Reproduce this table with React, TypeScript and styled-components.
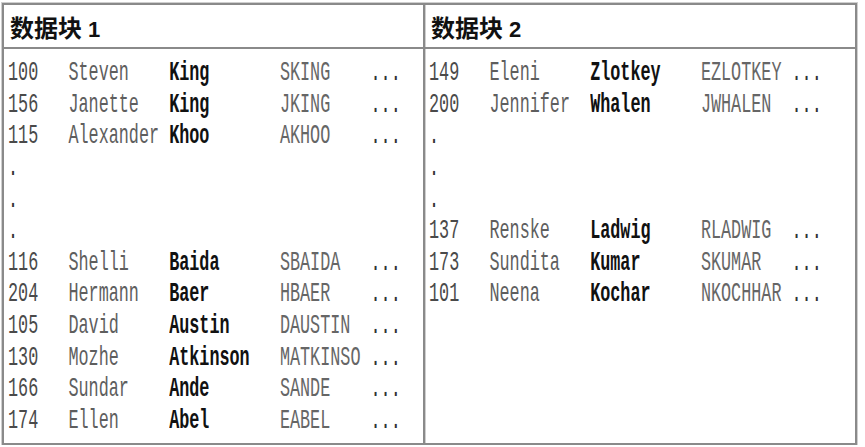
import React from "react";
import styled, { createGlobalStyle } from "styled-components";

const GlobalStyle = createGlobalStyle`
  html, body {
    margin: 0;
    padding: 0;
    background: #fff;
  }
`;

type Emp = [string, string, string, string];
type Line = Emp | null;

const blockOne: Line[] = [
  ["100", "Steven", "King", "SKING"],
  ["156", "Janette", "King", "JKING"],
  ["115", "Alexander", "Khoo", "AKHOO"],
  null,
  null,
  null,
  ["116", "Shelli", "Baida", "SBAIDA"],
  ["204", "Hermann", "Baer", "HBAER"],
  ["105", "David", "Austin", "DAUSTIN"],
  ["130", "Mozhe", "Atkinson", "MATKINSO"],
  ["166", "Sundar", "Ande", "SANDE"],
  ["174", "Ellen", "Abel", "EABEL"],
];

const blockTwo: Line[] = [
  ["149", "Eleni", "Zlotkey", "EZLOTKEY"],
  ["200", "Jennifer", "Whalen", "JWHALEN"],
  null,
  null,
  null,
  ["137", "Renske", "Ladwig", "RLADWIG"],
  ["173", "Sundita", "Kumar", "SKUMAR"],
  ["101", "Neena", "Kochar", "NKOCHHAR"],
];

const Table = styled.div`
  box-sizing: border-box;
  margin: 3px 0 0 2px;
  width: 855px;
  height: 442px;
  display: grid;
  grid-template-columns: 421px 1fr;
  border: 2px solid #8a8a8a;
  box-shadow: 0 0 0 1px #cfcfcf;
`;

const Block = styled.div<{ $first?: boolean }>`
  display: flex;
  flex-direction: column;
  border-right: ${({ $first }) => ($first ? "2px solid #8a8a8a" : "none")};
  box-shadow: ${({ $first }) => ($first ? "1px 0 0 #cfcfcf" : "none")};
  min-width: 0;
`;

const Header = styled.div`
  box-sizing: border-box;
  height: 44px;
  border-bottom: 2px solid #8a8a8a;
  display: flex;
  align-items: baseline;
  padding: 8px 0 0 6px;
  font-family: "Noto Sans CJK SC", sans-serif;
  font-weight: 700;
  font-size: 24px;
  line-height: 28px;
  color: #111;
`;

const Num = styled.span`
  font-family: "Liberation Sans", "DejaVu Sans", sans-serif;
  font-weight: 700;
  font-size: 22px;
  margin-left: 6px;
`;

const Body = styled.div`
  padding: 8px 0 0 4px;
  font-family: "Liberation Mono", "Courier New", monospace;
  font-size: 16.8px;
`;

const Row = styled.div`
  height: 31.6px;
  display: grid;
  grid-template-columns: 6ch 10ch 11ch 9ch auto;
  align-items: center;
  white-space: pre;
`;

const Cell = styled.span<{ $bold?: boolean; $tone?: string }>`
  display: inline-block;
  transform: scaleY(1.6);
  color: ${({ $bold, $tone }) => ($bold ? "#111" : $tone || "#5e5e5e")};
  font-weight: ${({ $bold }) => ($bold ? 700 : 400)};
`;

const DataBlock = ({
  title,
  lines,
  first,
}: {
  title: string;
  lines: Line[];
  first?: boolean;
}) => (
  <Block $first={first}>
    <Header>
      数据块<Num>{title}</Num>
    </Header>
    <Body>
      {lines.map((line, i) =>
        line ? (
          <Row key={`r-${i}`}>
            <Cell $tone="#4a4a4a">{line[0]}</Cell>
            <Cell>{line[1]}</Cell>
            <Cell $bold>{line[2]}</Cell>
            <Cell $tone="#666">{line[3]}</Cell>
            <Cell $tone="#333">...</Cell>
          </Row>
        ) : (
          <Row key={`r-${i}`}>
            <Cell $tone="#333">.</Cell>
          </Row>
        )
      )}
    </Body>
  </Block>
);

export default function App() {
  return (
    <>
      <GlobalStyle />
      <Table>
        <DataBlock title="1" lines={blockOne} first />
        <DataBlock title="2" lines={blockTwo} />
      </Table>
    </>
  );
}
